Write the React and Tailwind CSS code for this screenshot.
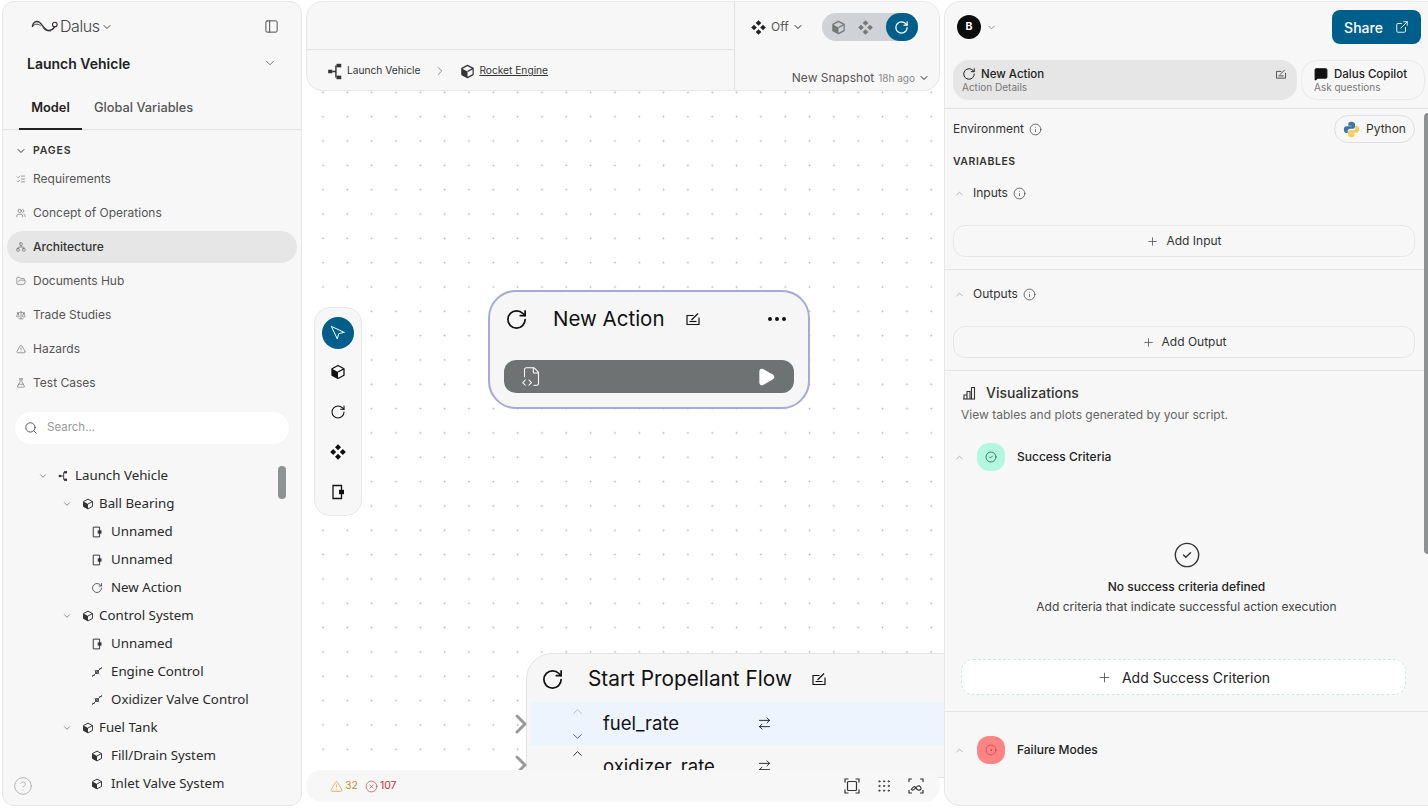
import React from 'react';
import { ChevronDown, ChevronUp, ChevronRight, PanelLeft, RotateCw, Search, Plus, Info, ExternalLink, Ellipsis, ArrowRightLeft, CircleHelp, TriangleAlert, CircleX, Grip, ListChecks, Users, Network, FolderOpen, Scale, FlaskConical, FileCode2, Play, Navigation, CircleCheck, CircleDot, MessageSquare } from 'lucide-react';

const CubeIcon = ({ className = 'w-3 h-3' }) => (
  <svg viewBox="0 0 16 16" className={className}>
    <path d="M8 1.5 14 4.7v6.6L8 14.5 2 11.3V4.7z" fill="none" stroke="currentColor" strokeWidth="1.3" strokeLinejoin="round" />
    <path d="M2 4.7 8 8v6.5L2 11.3z" fill="currentColor" />
    <path d="M8 8l6-3.3" stroke="currentColor" strokeWidth="1.3" />
  </svg>
);

const DiamondsIcon = ({ className = 'w-4 h-4' }) => (
  <svg viewBox="0 0 16 16" className={className} fill="currentColor">
    <path d="M8 .2 11 3.200 8 6.200 5 3.200z" />
    <path d="M8 9.800 11 12.800 8 15.800 5 12.800z" />
    <path d="M3.200 5 6.200 8 3.200 11 .2 8z" />
    <path d="M12.800 5 15.800 8 12.800 11 9.800 8z" />
  </svg>
);

const PortIcon = ({ className = 'w-3 h-3' }) => (
  <svg viewBox="0 0 16 16" className={className}>
    <path d="M3 1.500h8.500v13H3z" fill="none" stroke="currentColor" strokeWidth="1.300" />
    <rect x="9" y="5.800" width="5" height="4.400" fill="currentColor" />
  </svg>
);

const EditIcon = ({ className = 'w-4 h-4' }) => (
  <svg viewBox="0 0 16 16" className={className} fill="none" stroke="currentColor" strokeWidth="1.200">
    <path d="M8.500 4.500H2v9h12V6.500" />
    <path d="M6.500 9 13 2.500" />
    <path d="M4.500 10.500h7" />
  </svg>
);

const TreeRootIcon = ({ className = 'w-3.5 h-3.5' }) => (
  <svg viewBox="0 0 16 16" className={className}>
    <rect x="1" y="6.500" width="3.500" height="3" fill="currentColor" />
    <path d="M4.500 8h3M7.500 3v10" stroke="currentColor" strokeWidth="1.200" fill="none" />
    <rect x="8" y="1.500" width="4" height="3" fill="currentColor" />
    <rect x="8" y="11.500" width="4" height="3" fill="currentColor" />
  </svg>
);

const ControlIcon = ({ className = 'w-3 h-3' }) => (
  <svg viewBox="0 0 16 16" className={className} fill="none" stroke="currentColor" strokeWidth="1.100">
    <path d="M1.500 14.500 14.500 1.500" />
    <path d="M5 5.500 10.500 11" />
    <circle cx="8" cy="8" r="2.200" />
    <path d="M11 3.500h3.500M1.500 12.500H5" />
  </svg>
);

const BarsIcon = () => (
  <svg viewBox="0 0 14 14" className="w-[14px] h-[14px] mr-[10px]" fill="none" stroke="currentColor" strokeWidth="1.100">
    <path d="M1 13h12" />
    <path d="M2 13V9h3v4M5 13V5.500h3V13M9.500 13V1.500h3V13" />
  </svg>
);

const Logo = () => (
  <svg viewBox="0 0 30 14" className="w-[28px] h-[14px]" fill="none" stroke="#333" strokeLinecap="round">
    <path d="M1.500 7C2.500 2.500 6 1 9 3c3 2 4.500 7.500 8.500 8.500 3.500.7 6-.8 7.500-3" strokeWidth="1.500" />
    <path d="M1.500 8C3 4.500 7 4 10 6.500" strokeWidth="1" />
    <path d="M13 9c2 3 6 4 9 3" strokeWidth="1" strokeDasharray="1 1" />
    <circle cx="25.500" cy="5.500" r="2.500" strokeWidth="1.200" />
  </svg>
);

const PythonIcon = () => (
  <svg viewBox="0 0 16 16" className="w-[17px] h-[17px]">
    <path d="M8 .8C5.400.8 5 1.900 5 3v1.500h3.200V5H3C1.600 5 .8 6.200.8 8s.8 3.200 2.200 3.200h1.400V9.400c0-1.200 1-2.200 2.200-2.200h3c1 0 1.700-.8 1.700-1.700V3C11.300 1.700 9.900.8 8 .8z" fill="#3b76a8" />
    <path d="M8 15.200c2.600 0 3-1.100 3-2.200v-1.500H7.800V11H13c1.400 0 2.200-1.200 2.200-3S14.400 4.800 13 4.800h-1.400v1.800c0 1.200-1 2.200-2.200 2.200h-3c-1 0-1.700.8-1.700 1.700V13c0 1.300 1.400 2.200 3.300 2.200z" fill="#f5cf55" />
  </svg>
);

const FitIcon = () => (
  <svg viewBox="0 0 16 16" className="w-[16px] h-[16px]" fill="none" stroke="currentColor" strokeWidth="1.200">
    <path d="M1 4.500V1h3.500M11.500 1H15v3.500M15 11.500V15h-3.500M4.500 15H1v-3.500" />
    <rect x="3.500" y="3.500" width="9" height="9" rx="1" />
  </svg>
);

const MapIcon = () => (
  <svg viewBox="0 0 16 16" className="w-[16px] h-[16px]" fill="none" stroke="currentColor" strokeWidth="1.200">
    <path d="M1 4V1h3M12 1h3v3M15 12v3h-3M4 15H1v-3" />
    <path d="M3 12c2-4 4-4 5-2s3 3 4.500 1.500-.5-4-2.500-3.500-4 5-6 4" />
  </svg>
);

const pages = [
  { label: 'Requirements', Icon: ListChecks },
  { label: 'Concept of Operations', Icon: Users },
  { label: 'Architecture', Icon: Network, active: true },
  { label: 'Documents Hub', Icon: FolderOpen },
  { label: 'Trade Studies', Icon: Scale },
  { label: 'Hazards', Icon: TriangleAlert },
  { label: 'Test Cases', Icon: FlaskConical },
];

const tree = [
  { label: 'Launch Vehicle', level: 0, Icon: TreeRootIcon, open: true },
  { label: 'Ball Bearing', level: 1, Icon: CubeIcon, open: true },
  { label: 'Unnamed', level: 2, Icon: PortIcon },
  { label: 'Unnamed', level: 2, Icon: PortIcon },
  { label: 'New Action', level: 2, Icon: RotateCw },
  { label: 'Control System', level: 1, Icon: CubeIcon, open: true },
  { label: 'Unnamed', level: 2, Icon: PortIcon },
  { label: 'Engine Control', level: 2, Icon: ControlIcon },
  { label: 'Oxidizer Valve Control', level: 2, Icon: ControlIcon },
  { label: 'Fuel Tank', level: 1, Icon: CubeIcon, open: true },
  { label: 'Fill/Drain System', level: 2, Icon: CubeIcon },
  { label: 'Inlet Valve System', level: 2, Icon: CubeIcon },
];

const Sidebar = () => (
  <aside className="relative w-[300px] h-[805px] shrink-0 flex flex-col bg-[#f7f7f7] border border-[#e8e8e8] rounded-xl overflow-hidden">
    <div className="h-[48px] shrink-0 flex items-center justify-between pl-[28px] pr-[22px]">
      <div className="flex items-center gap-[1px] text-[#444]">
        <Logo />
        <span className="text-[16px] font-light tracking-tight">Dalus</span>
        <ChevronDown className="w-3 h-3 mt-[2px]" />
      </div>
      <PanelLeft className="w-[15px] h-[15px] text-[#444]" strokeWidth={1.5} />
    </div>
    <div className="h-[26px] shrink-0 flex items-center justify-between pl-[24px] pr-[24px]">
      <span className="text-[14px] font-semibold text-[#222]">Launch Vehicle</span>
      <ChevronDown className="w-3.5 h-3.5 text-[#666]" strokeWidth={1.5} />
    </div>
    <div className="h-[54px] shrink-0 flex items-end pl-[16px] border-b border-[#e2e2e2]">
      <div className="w-[63px] h-[42px] flex items-center justify-center text-[12.8px] font-semibold text-[#222] border-b-2 border-[#222] -mb-[1px]">Model</div>
      <div className="h-[42px] flex items-center pl-[12px] text-[12.8px] font-medium text-[#555]">Global Variables</div>
    </div>
    <div className="h-[42px] shrink-0 flex items-center pl-[12px] gap-[6px] text-[#333]">
      <ChevronDown className="w-3 h-3" />
      <span className="text-[10.5px] font-semibold tracking-[0.08em]">PAGES</span>
    </div>
    <nav className="shrink-0 flex flex-col px-[4px] -mt-[9px]">
      {pages.map(({ label, Icon, active }) => (
        <div
          key={label}
          className={`h-[32px] mb-[2px] flex items-center gap-[7px] pl-[9px] rounded-full text-[12px] ${active ? 'bg-[#e6e6e6] text-[#333] font-medium' : 'text-[#555]'}`}
        >
          <Icon className="w-[10px] h-[10px] text-[#666]" strokeWidth={1.5} />
          {label}
        </div>
      ))}
    </nav>
    <div className="mx-[12px] mt-[11px] h-[32px] shrink-0 flex items-center gap-[9px] pl-[9px] bg-white rounded-full">
      <Search className="w-[14px] h-[14px] text-[#444]" strokeWidth={1.5} />
      <span className="text-[11.5px] text-[#999]">Search...</span>
    </div>
    <div className="mt-[18px] flex flex-col font-['Noto_Sans'] text-[13.3px] text-[#2a2a2a]">
      {tree.map((row, i) => (
        <div key={i} className="h-[28px] shrink-0 flex items-center">
          {row.level === 0 && <div className="w-[35px]" />}
          {row.level === 1 && <div className="w-[59px]" />}
          {row.level === 2 && <div className="w-[88px]" />}
          {row.open && <ChevronDown className="w-[10px] h-[10px] text-[#777] mr-[10px]" />}
          <row.Icon className={`w-[12px] h-[12px] text-[#333] ${row.level === 2 ? 'mr-[8px]' : 'mr-[5px]'}`} strokeWidth={1.5} />
          <span>{row.label}</span>
        </div>
      ))}
    </div>
    <div className="absolute left-[275px] top-[464px] w-[8px] h-[33px] rounded bg-[#8f9293]" />
    <CircleHelp className="absolute left-[10px] top-[774px] w-[20px] h-[20px] text-[#aaa]" strokeWidth={1} />
  </aside>
);

const HeaderBar = () => (
  <header className="w-[634px] h-[90px] shrink-0 flex bg-[#f7f7f7] border border-[#e8e8e8] rounded-2xl overflow-hidden">
    <div className="flex-1 flex flex-col">
      <div className="h-[48px] border-b border-[#e2e2e2]" />
      <div className="flex-1 flex items-center pl-[20px] pt-[2px] text-[10.2px] text-[#333]">
        <TreeRootIcon className="w-[19px] h-[19px] text-[#333]" />
        <span className="ml-[1px]">Launch Vehicle</span>
        <ChevronRight className="w-[14px] h-[14px] text-[#666] ml-[13px]" strokeWidth={1.2} />
        <CubeIcon className="w-[15px] h-[15px] text-[#333] ml-[13px]" />
        <span className="ml-[4px] underline">Rocket Engine</span>
      </div>
    </div>
    <div className="w-[205px] shrink-0 flex flex-col border-l border-[#e2e2e2]">
      <div className="h-[50px] flex items-center pl-[16px]">
        <DiamondsIcon className="w-[15px] h-[15px] text-[#222]" />
        <span className="ml-[5px] text-[12px] text-[#555]">Off</span>
        <ChevronDown className="ml-[3px] w-[12px] h-[12px] text-[#222]" />
        <div className="ml-[18px] w-[96px] h-[28px] flex items-center justify-between pl-[9px] rounded-full bg-[#cfd2d6] text-[#777]">
          <CubeIcon className="w-[15px] h-[15px]" />
          <DiamondsIcon className="w-[15px] h-[15px]" />
          <div className="w-[32px] h-[28px] flex items-center justify-center rounded-full bg-[#005f8a] text-white">
            <RotateCw className="w-[15px] h-[15px]" strokeWidth={2} />
          </div>
        </div>
      </div>
      <div className="flex-1 flex items-center justify-end pr-[9px] pt-[14px] text-[12px] text-[#555]">
        <span>New Snapshot</span>
        <span className="ml-[4px] text-[10px] text-[#888]">18h ago</span>
        <ChevronDown className="ml-[3px] w-[12px] h-[12px] text-[#222]" />
      </div>
    </div>
  </header>
);

const Toolbar = () => (
  <div className="absolute left-[8px] top-[216px] w-[48px] h-[209px] flex flex-col items-center pt-[9px] bg-[#f7f7f7] border border-[#e8e8e8] rounded-2xl text-[#111]">
    <div className="w-[32px] h-[32px] flex items-center justify-center rounded-full bg-[#005f8a] text-white">
      <Navigation className="w-[16px] h-[16px] -scale-x-100" strokeWidth={1.5} />
    </div>
    <div className="mt-[15px] flex flex-col items-center gap-[24px]">
      <CubeIcon className="w-[16px] h-[16px]" />
      <RotateCw className="w-[16px] h-[16px]" strokeWidth={1.6} />
      <DiamondsIcon className="w-[16px] h-[16px]" />
      <PortIcon className="w-[16px] h-[16px]" />
    </div>
  </div>
);

const NewActionNode = () => (
  <div className="absolute left-[182px] top-[199px] w-[322px] h-[119px] flex flex-col bg-[#f6f6f7] border-2 border-[#a7a9d9] rounded-[28px] px-[14px]">
    <div className="h-[54px] flex items-center text-[#111]">
      <RotateCw className="ml-[1px] w-[23px] h-[23px]" strokeWidth={1.8} />
      <span className="ml-[25px] text-[20.5px]">New Action</span>
      <EditIcon className="ml-[20px] w-[16px] h-[16px]" />
      <Ellipsis className="ml-auto mr-[5px] w-[24px] h-[24px]" strokeWidth={2} />
    </div>
    <div className="mt-[14px] h-[33px] flex items-center justify-between rounded-xl bg-[#6f7272] pl-[17px] pr-[18px] text-white">
      <FileCode2 className="w-[21px] h-[21px]" strokeWidth={1.2} />
      <Play className="w-[20px] h-[20px] fill-white" />
    </div>
  </div>
);

const FlowNode = () => (
  <div className="absolute left-[220px] top-[562px] w-[470px] h-[125px] bg-[#f6f6f7] border border-[#e4e4e4] rounded-tl-[26px] overflow-hidden text-[#111]">
    <div className="h-[48px] pt-[2px] flex items-center pl-[14px]">
      <RotateCw className="w-[23px] h-[23px]" strokeWidth={1.8} />
      <span className="ml-[24px] text-[20.8px]">Start Propellant Flow</span>
      <EditIcon className="ml-[19px] w-[16px] h-[16px]" />
    </div>
    <div className="ml-[3px] h-[43px] flex items-center bg-[#eef4fd] relative">
      <ChevronUp className="absolute left-[40px] top-[2px] w-[15px] h-[15px] text-[#aaa]" strokeWidth={1.2} />
      <ChevronDown className="absolute left-[40px] top-[27px] w-[15px] h-[15px] text-[#333]" strokeWidth={1.2} />
      <span className="ml-[73px] w-[154px] text-[18.5px]">fuel_rate</span>
      <ArrowRightLeft className="w-[15px] h-[15px]" strokeWidth={1.4} />
    </div>
    <div className="ml-[3px] h-[43px] flex items-center relative">
      <ChevronUp className="absolute left-[40px] top-[1px] w-[15px] h-[15px] text-[#111]" strokeWidth={1.4} />
      <span className="ml-[73px] w-[154px] text-[18.5px]">oxidizer_rate</span>
      <ArrowRightLeft className="w-[15px] h-[15px]" strokeWidth={1.4} />
    </div>
  </div>
);

const StatusBar = () => (
  <div className="absolute left-0 top-[769px] w-[634px] h-[32px] flex items-center bg-[#f7f7f7] rounded-2xl pl-[24px] pr-[16px] text-[10.5px]">
    <TriangleAlert className="w-[13px] h-[13px] text-[#d99a3a]" strokeWidth={1.3} />
    <span className="ml-[2px] text-[#c98a2a]">32</span>
    <CircleX className="ml-[7px] w-[13px] h-[13px] text-[#c8323c]" strokeWidth={1.2} />
    <span className="ml-[2px] text-[#c8323c]">107</span>
    <div className="ml-auto flex items-center gap-[16px] text-[#333]">
      <FitIcon />
      <Grip className="w-[16px] h-[16px]" strokeWidth={1.3} />
      <MapIcon />
    </div>
  </div>
);

const AddButton = ({ children }) => (
  <div className="ml-[8px] mr-[13px] h-[32px] flex items-center justify-center gap-[7px] rounded-xl border border-[#e6e6e6] text-[12px] text-[#333]">
    <Plus className="w-[13px] h-[13px] text-[#555]" strokeWidth={1.5} />
    {children}
  </div>
);

const SectionLabel = ({ children, info }) => (
  <div className="flex items-center pl-[9px] text-[12px] text-[#333]">
    <ChevronUp className="w-[11px] h-[11px] text-[#aaa]" />
    <span className="ml-[8px]">{children}</span>
    {info && <Info className="ml-[5px] w-[13px] h-[13px] text-[#444]" strokeWidth={1.4} />}
  </div>
);

const RightPanel = () => (
  <aside className="relative w-[484px] h-[805px] shrink-0 flex flex-col bg-[#f7f7f7] border-l border-t border-b border-[#e8e8e8] rounded-l-2xl overflow-hidden">
    <div className="h-[58px] shrink-0 flex items-start justify-between pt-[8px] pl-[12px] pr-[7px]">
      <div className="flex items-center gap-[5px] mt-[5px]">
        <div className="w-[24px] h-[24px] flex items-center justify-center rounded-full bg-[#0d0d0d] text-white text-[10.5px] font-bold">B</div>
        <ChevronDown className="w-[11px] h-[11px] text-[#888]" />
      </div>
      <div className="w-[89px] h-[34px] flex items-center justify-center gap-[12px] rounded-lg bg-[#005f8a] text-white text-[14px] font-medium">
        Share
        <ExternalLink className="w-[14px] h-[14px]" strokeWidth={1.5} />
      </div>
    </div>
    <div className="h-[49px] shrink-0 flex items-start gap-[4px] pl-[8px] pr-[3px] border-b border-[#e2e2e2]">
      <div className="w-[344px] h-[40px] flex flex-col justify-center pl-[9px] pr-[10px] rounded-2xl bg-[#e6e6e6]">
        <div className="flex items-center text-[11.5px] font-medium text-[#222] leading-[14px]">
          <RotateCw className="w-[14px] h-[14px] mr-[5px]" strokeWidth={1.7} />
          New Action
          <EditIcon className="ml-auto w-[12px] h-[12px] text-[#444]" />
        </div>
        <div className="text-[10px] text-[#777] leading-[12px]">Action Details</div>
      </div>
      <div className="flex-1 h-[40px] flex flex-col justify-center pl-[12px] rounded-2xl border border-[#e8e8e8]">
        <div className="flex items-center text-[11.5px] font-medium text-[#222] leading-[14px]">
          <MessageSquare className="w-[14px] h-[14px] mr-[6px] fill-[#111] text-[#111]" />
          Dalus Copilot
        </div>
        <div className="text-[10px] text-[#777] leading-[12px]">Ask questions</div>
      </div>
    </div>
    <div className="h-[40px] shrink-0 flex items-center justify-between pl-[8px] pr-[13px]">
      <div className="flex items-center gap-[5px] text-[12px] text-[#333]">
        Environment
        <Info className="w-[13px] h-[13px] text-[#444]" strokeWidth={1.4} />
      </div>
      <div className="w-[81px] h-[28px] flex items-center justify-center gap-[6px] rounded-full border border-[#dcdfe3] text-[12px] text-[#333]">
        <PythonIcon />
        Python
      </div>
    </div>
    <div className="h-[24px] pt-[2px] shrink-0 flex items-center pl-[8px] text-[10.5px] font-semibold tracking-[0.05em] text-[#333]">VARIABLES</div>
    <div className="h-[97px] shrink-0 flex flex-col border-b border-[#e6e6e6]">
      <div className="mt-[11px]"><SectionLabel info>Inputs</SectionLabel></div>
      <div className="mt-[23px]"><AddButton>Add Input</AddButton></div>
    </div>
    <div className="h-[101px] shrink-0 flex flex-col border-b border-[#e6e6e6]">
      <div className="mt-[15px]"><SectionLabel info>Outputs</SectionLabel></div>
      <div className="mt-[23px]"><AddButton>Add Output</AddButton></div>
    </div>
    <div className="mt-[11px] flex items-center pl-[17px] text-[14px] font-medium text-[#333]">
      <BarsIcon />
      Visualizations
    </div>
    <div className="mt-[3px] pl-[16px] text-[12px] text-[#666]">View tables and plots generated by your script.</div>
    <div className="mt-[19px] flex items-center pl-[9px]">
      <ChevronUp className="w-[11px] h-[11px] text-[#aaa]" />
      <div className="ml-[12px] w-[28px] h-[28px] flex items-center justify-center rounded-xl bg-[#b4f7e0]">
        <CircleCheck className="w-[12px] h-[12px] text-[#1c5a46]" strokeWidth={1.5} />
      </div>
      <span className="ml-[12px] text-[12px] font-medium text-[#222]">Success Criteria</span>
    </div>
    <div className="mt-[70px] flex flex-col items-center">
      <CircleCheck className="w-[28px] h-[28px] text-[#333]" strokeWidth={1.2} />
      <div className="mt-[9px] text-[12px] font-medium text-[#222]">No success criteria defined</div>
      <div className="mt-[2px] text-[12px] text-[#444]">Add criteria that indicate successful action execution</div>
    </div>
    <div className="ml-[16px] mr-[22px] mt-[43px] h-[36px] shrink-0 flex items-center justify-center gap-[10px] rounded-xl bg-white border border-dashed border-[#c3f0de] text-[14px] text-[#222]">
      <Plus className="w-[15px] h-[15px] text-[#555]" strokeWidth={1.4} />
      Add Success Criterion
    </div>
    <div className="mt-[16px] border-b border-[#e6e6e6]" />
    <div className="mt-[24px] flex items-center pl-[9px]">
      <ChevronUp className="w-[11px] h-[11px] text-[#aaa]" />
      <div className="ml-[12px] w-[28px] h-[28px] flex items-center justify-center rounded-xl bg-[#ff8585]">
        <CircleDot className="w-[12px] h-[12px] text-[#d93a45]" strokeWidth={1.5} />
      </div>
      <span className="ml-[12px] text-[12px] font-medium text-[#222]">Failure Modes</span>
    </div>
    <div className="absolute right-0 top-[111px] w-[4px] h-[441px] rounded-l bg-[#8f9293]" />
  </aside>
);

const App = () => (
  <div className="w-[1428px] h-[808px] flex pt-[1px] pl-[2px] bg-white overflow-hidden font-['Inter',sans-serif]">
    <Sidebar />
    <main className="relative ml-[4px] w-[638px] h-[807px] shrink-0 flex flex-col overflow-hidden">
      <HeaderBar />
      <div className="relative flex-1 bg-[radial-gradient(circle,#b5b5b5_0.8px,transparent_1.1px)] bg-[size:24.33px_24.33px] bg-[position:4.83px_-10.8px]">
        <Toolbar />
        <NewActionNode />
        <FlowNode />
        <ChevronRight className="absolute left-[199px] top-[617px] w-[32px] h-[32px] text-[#999]" strokeWidth={2.2} />
        <ChevronRight className="absolute left-[199px] top-[658px] w-[32px] h-[32px] text-[#999]" strokeWidth={2.2} />
      </div>
      <StatusBar />
    </main>
    <RightPanel />
  </div>
);

export default App;
